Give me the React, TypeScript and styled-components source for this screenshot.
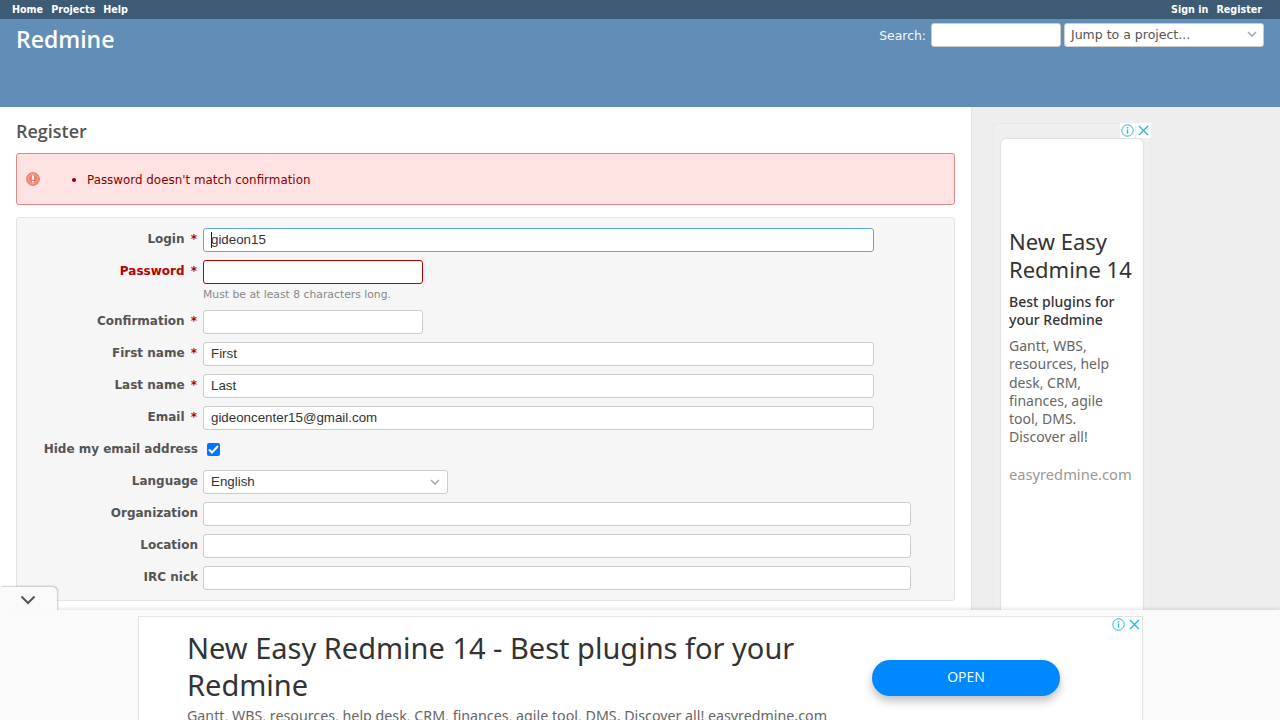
import React from "react";
import styled, { createGlobalStyle } from "styled-components";

const GlobalStyle = createGlobalStyle`
    html, body {
        margin: 0;
        padding: 0;
        height: 720px;
        overflow: hidden;
        background: #fff;
    }
    * { box-sizing: border-box; }
`;

const Page = styled.div`
    width: 1280px;
    height: 720px;
    overflow: hidden;
    position: relative;
    font-family: "DejaVu Sans", Verdana, sans-serif;
    font-size: 12px;
    color: #333;
`;

const TopMenu = styled.div`
    height: 19px;
    background: #3e5b76;
    display: flex;
    justify-content: space-between;
    padding: 0 18px 0 12px;
    align-items: center;
`;

const MenuList = styled.div`
    display: flex;
    gap: 8px;
`;

const MenuLink = styled.a`
    color: #fff;
    font-size: 9.6px;
    font-weight: bold;
    line-height: 17px;
`;

const Header = styled.div`
    height: 88px;
    background: #628db6;
    display: flex;
    justify-content: space-between;
    padding: 4px 16px 0;
`;

const Logo = styled.h1`
    margin: 0;
    color: #fff;
    font-family: "Open Sans", sans-serif;
    font-size: 23px;
    font-weight: 600;
    line-height: 32px;
`;

const QuickSearch = styled.div`
    display: flex;
    align-items: flex-start;
`;

const SearchLabel = styled.span`
    color: #f4f7fa;
    font-size: 12.4px;
    line-height: 26px;
    margin-right: 5px;
`;

const SearchBox = styled.div`
    width: 130px;
    height: 24px;
    background: #fff;
    border: 1px solid #ccc;
    border-radius: 3px;
    margin-right: 3px;
`;

const JumpBox = styled.div`
    width: 200px;
    height: 24px;
    background: #fff;
    border: 1px solid #ccc;
    border-radius: 3px;
    padding: 0 6px 2px;
    display: flex;
    align-items: center;
    justify-content: space-between;
    color: #555;
    font-size: 12.5px;
`;

const Chevron = () => (
    <svg width="10" height="6" viewBox="0 0 10 6" fill="none" stroke="#aaa" strokeWidth="1.6">
        <path d="M1 1l4 4 4-4" />
    </svg>
);

const Body = styled.div`
    display: flex;
    height: 613px;
`;

const Main = styled.div`
    width: 971px;
    padding: 10px 16px 0;
`;

const Title = styled.h2`
    margin: 0 0 8px;
    font-family: "Open Sans", sans-serif;
    font-size: 18px;
    font-weight: 600;
    line-height: 28px;
    color: #555;
`;

const Flash = styled.div`
    height: 52px;
    background: #ffe3e3;
    border: 1px solid #dd8a8a;
    border-radius: 3px;
    color: #880000;
    display: flex;
    align-items: center;
    padding: 2px 0 0 9px;
    margin-bottom: 12px;
    font-size: 11.9px;
`;

const FlashIcon = styled.svg`
    margin-top: -2px;
`;

const FlashDot = styled.span`
    width: 4px;
    height: 4px;
    border-radius: 50%;
    background: #880000;
    margin: 0 11px 0 32px;
`;

const FormBox = styled.div`
    height: 384px;
    background: #f6f6f6;
    border: 1px solid #e4e4e4;
    border-radius: 3px;
    padding: 10px 0 0;
    display: flex;
    flex-direction: column;
`;

const Row = styled.div`
    display: flex;
    min-height: 24px;
    margin-bottom: 8px;
`;

const Label = styled.div<{ $error?: boolean; $required?: boolean }>`
    width: 186px;
    flex: none;
    padding-right: ${(p) => (p.$required ? "6px" : "5px")};
    text-align: right;
    font-size: 12px;
    font-weight: bold;
    line-height: 22px;
    color: ${(p) => (p.$error ? "#bb0000" : "#555")};
    white-space: nowrap;
`;

const Star = styled.span`
    color: #bb0000;
    margin-left: 2px;
`;

const Field = styled.div<{ $w: number; $state?: "focus" | "error" }>`
    width: ${(p) => p.$w}px;
    height: 24px;
    background: #fff;
    border: 1px solid
        ${(p) => (p.$state === "focus" ? "#5ba9e0" : p.$state === "error" ? "#bb0000" : "#ccc")};
    border-radius: 3px;
    padding: 0 7px;
    font-family: "Liberation Sans", Arial, sans-serif;
    font-size: 13.33px;
    line-height: 22px;
    color: #333;
    display: flex;
    align-items: center;
    justify-content: space-between;
`;

const Caret = styled.span`
    width: 1px;
    height: 16px;
    background: #222;
    margin-right: -1px;
`;

const FieldText = styled.span`
    display: flex;
    align-items: center;
`;

const Hint = styled.div`
    margin: -4px 0 8px 186px;
    color: #888;
    font-size: 10.8px;
    line-height: 14px;
`;

const Checkbox = styled.span`
    width: 13px;
    height: 13px;
    margin: 5px 0 0 4px;
    border-radius: 2px;
    background: #0075ff;
    display: flex;
    align-items: center;
    justify-content: center;
`;

const Sidebar = styled.div`
    width: 309px;
    background: #eeeeee;
    border-left: 1px solid #e2e2e2;
    padding: 16px 0 0 21px;
`;

const SideAd = styled.div`
    width: 158px;
    height: 500px;
    border: 1px solid #e8e8e8;
    background: #efefef;
    padding: 15px 7px 0;
    position: relative;
`;

const SideCard = styled.div`
    height: 480px;
    background: #fff;
    border-radius: 5px;
    box-shadow: 0 0 2px rgba(0, 0, 0, 0.2);
    padding: 88px 8px 0;
`;

const SideTitle = styled.div`
    font-family: "Noto Sans", sans-serif;
    font-size: 22px;
    line-height: 28px;
    color: #333;
    margin-bottom: 10px;
`;

const SideSub = styled.div`
    font-family: "Noto Sans", sans-serif;
    font-size: 14px;
    font-weight: 500;
    line-height: 18px;
    color: #333;
    margin-bottom: 8px;
`;

const SideText = styled.div`
    font-family: "Noto Sans", sans-serif;
    font-size: 14px;
    line-height: 18.3px;
    color: #666;
    margin-bottom: 17px;
    padding-right: 8px;
`;

const SideDomain = styled.div`
    font-family: "Noto Sans", sans-serif;
    font-size: 14.7px;
    color: #999;
`;

const AdBadges = styled.div<{ $outset?: number }>`
    position: absolute;
    top: ${(p) => -(p.$outset ?? 0)}px;
    right: ${(p) => -(p.$outset ?? 0)}px;
    display: flex;
    gap: 1px;
`;

const AdBadge = styled.span`
    width: 15px;
    height: 15px;
    background: #fff;
    display: flex;
    align-items: center;
    justify-content: center;
`;

const InfoIcon = () => (
    <svg width="13" height="13" viewBox="0 0 13 13" fill="none" stroke="#1fb8d8" strokeWidth="1">
        <circle cx="6.5" cy="6.5" r="5.7" />
        <path d="M6.5 5.5v4M6.5 3.2v1.2" strokeWidth="1.4" />
    </svg>
);

const CloseIcon = () => (
    <svg width="11" height="11" viewBox="0 0 11 11" fill="none" stroke="#1fb8d8" strokeWidth="1.3">
        <path d="M1 1l9 9M10 1l-9 9" />
    </svg>
);

const BottomBar = styled.div`
    position: absolute;
    left: 0;
    right: 0;
    bottom: 0;
    height: 110px;
    background: #fafafa;
    box-shadow: 0 -1px 4px rgba(0, 0, 0, 0.12);
    padding-top: 6px;
`;

const BarHandle = styled.div`
    position: absolute;
    left: 0;
    top: -23px;
    width: 57px;
    height: 24px;
    padding: 2px 1px 0 0;
    background: #fafafa;
    border-radius: 0 5px 0 0;
    box-shadow: 1px -1px 2px rgba(0, 0, 0, 0.2);
    display: flex;
    align-items: center;
    justify-content: center;
`;

const BarFrame = styled.div`
    margin-left: 138px;
    width: 1005px;
    height: 104px;
    background: #fff;
    border: 1px solid #e4e4e4;
    border-bottom: none;
    display: flex;
    padding: 12px 0 0 48px;
    position: relative;
`;

const BarCopy = styled.div`
    width: 650px;
    flex: none;
`;

const BarTitle = styled.div`
    font-family: "Noto Sans", sans-serif;
    font-size: 29px;
    line-height: 37px;
    color: #333;
    margin-bottom: 2px;
`;

const BarText = styled.div`
    font-family: "Noto Sans", sans-serif;
    font-size: 14.25px;
    color: #666;
    line-height: 22px;
    white-space: nowrap;
`;

const OpenButton = styled.div`
    width: 188px;
    height: 36px;
    margin: 31px 0 0 35px;
    padding-bottom: 3px;
    border-radius: 18px;
    background: #0088ff;
    box-shadow: 0 5px 10px rgba(0, 0, 0, 0.25);
    color: #fff;
    font-family: "Open Sans", sans-serif;
    font-size: 14px;
    display: flex;
    align-items: center;
    justify-content: center;
`;

export default function App() {
    return (
        <Page>
            <GlobalStyle />
            <TopMenu>
                <MenuList>
                    <MenuLink>Home</MenuLink>
                    <MenuLink>Projects</MenuLink>
                    <MenuLink>Help</MenuLink>
                </MenuList>
                <MenuList>
                    <MenuLink>Sign in</MenuLink>
                    <MenuLink>Register</MenuLink>
                </MenuList>
            </TopMenu>
            <Header>
                <Logo>Redmine</Logo>
                <QuickSearch>
                    <SearchLabel>Search:</SearchLabel>
                    <SearchBox />
                    <JumpBox>
                        Jump to a project...
                        <Chevron />
                    </JumpBox>
                </QuickSearch>
            </Header>
            <Body>
                <Main>
                    <Title>Register</Title>
                    <Flash>
                        <FlashIcon width="14" height="14" viewBox="0 0 14 14">
                            <circle cx="7" cy="7" r="6.5" fill="#ee7f6d" stroke="#dd9082" />
                            <circle cx="7" cy="7" r="4.8" fill="none" stroke="#f6b3a7" strokeWidth="0.8" />
                            <path d="M7 3.4v4.4M7 9.1v1.5" stroke="#fff" strokeWidth="1.8" />
                        </FlashIcon>
                        <FlashDot />
                        Password doesn't match confirmation
                    </Flash>
                    <FormBox>
                        <Row>
                            <Label $required>Login <Star>*</Star></Label>
                            <Field $w={671} $state="focus"><FieldText><Caret />gideon15</FieldText></Field>
                        </Row>
                        <Row>
                            <Label $required $error>Password <Star>*</Star></Label>
                            <Field $w={220} $state="error" />
                        </Row>
                        <Hint>Must be at least 8 characters long.</Hint>
                        <Row>
                            <Label $required>Confirmation <Star>*</Star></Label>
                            <Field $w={220} />
                        </Row>
                        <Row>
                            <Label $required>First name <Star>*</Star></Label>
                            <Field $w={671}>First</Field>
                        </Row>
                        <Row>
                            <Label $required>Last name <Star>*</Star></Label>
                            <Field $w={671}>Last</Field>
                        </Row>
                        <Row>
                            <Label $required>Email <Star>*</Star></Label>
                            <Field $w={671}>gideoncenter15@gmail.com</Field>
                        </Row>
                        <Row>
                            <Label>Hide my email address</Label>
                            <Checkbox>
                                <svg width="11" height="9" viewBox="0 0 11 9" fill="none" stroke="#fff" strokeWidth="2">
                                    <path d="M1 4.5l3 3 6-6.5" />
                                </svg>
                            </Checkbox>
                        </Row>
                        <Row>
                            <Label>Language</Label>
                            <Field $w={245}>
                                English
                                <Chevron />
                            </Field>
                        </Row>
                        <Row>
                            <Label>Organization</Label>
                            <Field $w={708} />
                        </Row>
                        <Row>
                            <Label>Location</Label>
                            <Field $w={708} />
                        </Row>
                        <Row>
                            <Label>IRC nick</Label>
                            <Field $w={708} />
                        </Row>
                    </FormBox>
                </Main>
                <Sidebar>
                    <SideAd>
                        <AdBadges $outset={1}>
                            <AdBadge><InfoIcon /></AdBadge>
                            <AdBadge><CloseIcon /></AdBadge>
                        </AdBadges>
                        <SideCard>
                            <SideTitle>New Easy Redmine 14</SideTitle>
                            <SideSub>Best plugins for your Redmine</SideSub>
                            <SideText>Gantt, WBS, resources, help desk, CRM, finances, agile tool, DMS. Discover all!</SideText>
                            <SideDomain>easyredmine.com</SideDomain>
                        </SideCard>
                    </SideAd>
                </Sidebar>
            </Body>
            <BottomBar>
                <BarHandle>
                    <svg width="16" height="10" viewBox="0 0 16 10" fill="none" stroke="#555" strokeWidth="2">
                        <path d="M1.5 1.5L8 8l6.5-6.5" />
                    </svg>
                </BarHandle>
                <BarFrame>
                    <AdBadges>
                        <AdBadge><InfoIcon /></AdBadge>
                        <AdBadge><CloseIcon /></AdBadge>
                    </AdBadges>
                    <BarCopy>
                        <BarTitle>New Easy Redmine 14 - Best plugins for your Redmine</BarTitle>
                        <BarText>Gantt, WBS, resources, help desk, CRM, finances, agile tool, DMS. Discover all! easyredmine.com</BarText>
                    </BarCopy>
                    <OpenButton>OPEN</OpenButton>
                </BarFrame>
            </BottomBar>
        </Page>
    );
}
